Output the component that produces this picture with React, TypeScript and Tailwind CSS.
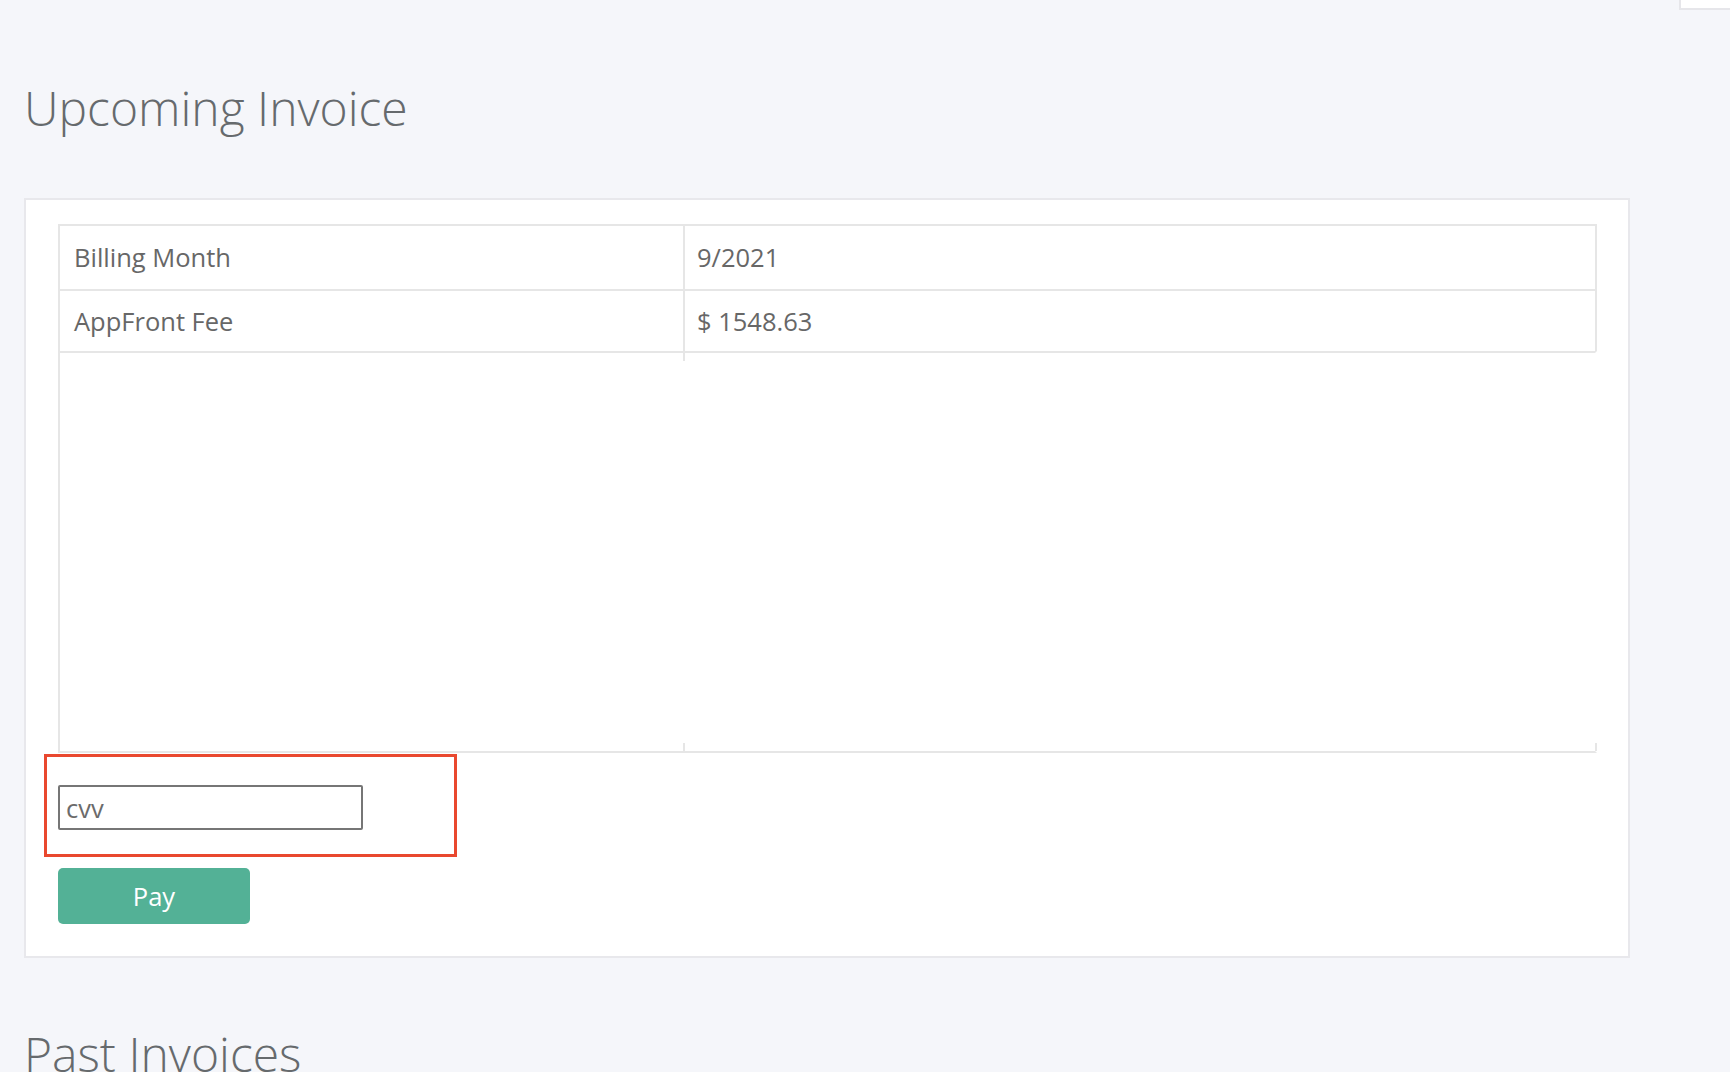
import { useState } from "react";

const font = { fontFamily: '"Open Sans", "Noto Sans", sans-serif' };

function InvoiceRow({ label, value, first }: { label: string; value: string; first?: boolean }) {
  return (
    <div className={`grid grid-cols-[623px_1fr] ${first ? "h-[63px]" : "h-[62px] border-t-2 border-[#e6e6e6]"}`}>
      <div className="flex items-center pl-[14px] text-[25.5px] text-[#676767]">{label}</div>
      <div className="flex items-center border-l-2 border-[#e6e6e6] pl-[12px] text-[25.5px] text-[#676767]">
        {value}
      </div>
    </div>
  );
}

export default function App() {
  const [cvv, setCvv] = useState("cvv");

  return (
    <div className="relative min-h-screen overflow-hidden bg-[#f5f6fa] px-[24px]" style={font}>
      {/* top right dropdown stub */}
      <div className="absolute right-0 top-0 h-[10px] w-[51px] border-b-2 border-l-2 border-[#e6e6ea] bg-white" />

      <h3 className="pt-[84px] text-[48px] font-light leading-[48px] text-[#666a6d]">Upcoming Invoice</h3>

      {/* CARD */}
      <div className="mt-[66px] w-[1606px] border-2 border-[#e8e8ec] bg-white px-[32px] pb-[32px] pt-[24px]">
        <div className="w-[1539px] border-2 border-b-0 border-[#e6e6e6]">
          <InvoiceRow label="Billing Month" value="9/2021" first />
          <InvoiceRow label="AppFront Fee" value="$ 1548.63" />
        </div>

        {/* card element area */}
        <div className="flex h-[402px] w-[1539px] flex-col justify-between border-x-2 border-b-2 border-t-2 border-[#e6e6e6] border-r-transparent">
          <div className="grid h-[8px] grid-cols-[623px_1fr]">
            <div />
            <div className="border-l-2 border-[#e6e6e6]" />
          </div>
          <div className="grid h-[8px] grid-cols-[623px_1fr]">
            <div />
            <div className="-mr-[2px] border-x-2 border-[#e6e6e6]" />
          </div>
        </div>

        {/* FORM */}
        <div className="relative pt-[32px]">
          <div className="absolute left-[-14px] top-[1px] h-[103px] w-[413px] border-[3px] border-[#e9482f]" />
          <input
            value={cvv}
            onChange={(e) => setCvv(e.target.value)}
            className="relative block h-[45px] w-[305px] rounded-[2px] border-2 border-[#767676] px-[6px] text-[25.5px] text-[#6b6b6b] outline-none"
            style={font}
          />
        </div>
        <button className="mt-[38px] flex h-[56px] w-[192px] items-center justify-center rounded-[5px] bg-[#53b196] text-[25.5px] text-white">
          Pay
        </button>
      </div>

      <h3 className="mt-[72px] text-[48px] font-light leading-[48px] text-[#666a6d]">Past Invoices</h3>
    </div>
  );
}
